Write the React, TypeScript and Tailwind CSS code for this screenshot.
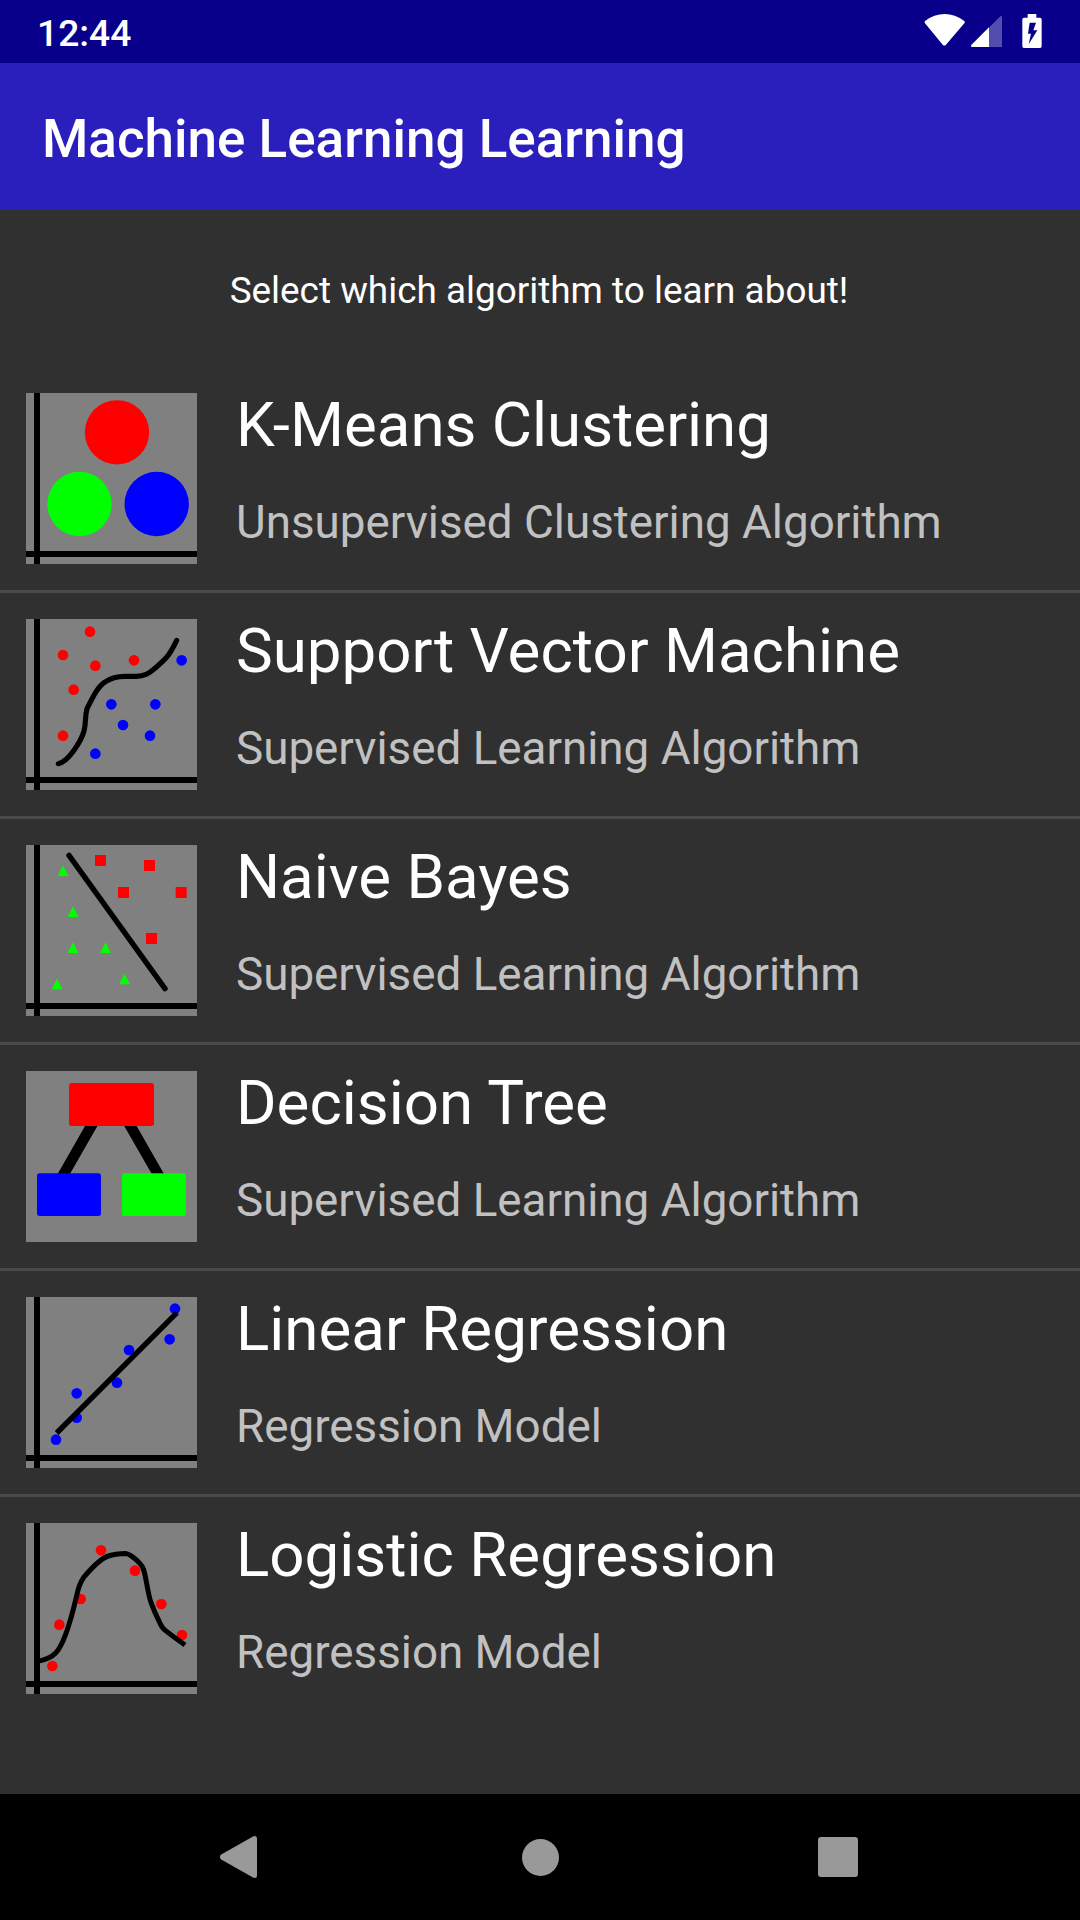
import type { ReactNode } from 'react';

const RED = '#ff0000';
const GREEN = '#00ff00';
const BLUE = '#0000ff';

function Axes({ top }: { top: number }) {
  return (
    <g fill="#000">
      <rect x={72} y={top} width={18} height={513} />
      <rect x={48} y={top + 474} width={513} height={18} />
    </g>
  );
}

function Dots({ points, color, r = 16 }: { points: number[][]; color: string; r?: number }) {
  return (
    <>
      {points.map(([x, y]) => (
        <circle key={`${x}-${y}`} cx={x} cy={y} r={r} fill={color} />
      ))}
    </>
  );
}

function Thumb({ top, children }: { top: number; children: ReactNode }) {
  return (
    <svg viewBox={`48 ${top} 513 513`} className="block size-[171px] shrink-0 bg-[#808080]">
      {children}
    </svg>
  );
}

const algorithms: { name: string; kind: string; thumb: ReactNode }[] = [
  {
    name: 'K-Means Clustering',
    kind: 'Unsupervised Clustering Algorithm',
    thumb: (
      <Thumb top={39}>
        <Axes top={39} />
        <Dots points={[[321, 157]]} color={RED} r={96.5} />
        <Dots points={[[208.5, 372]]} color={GREEN} r={96.5} />
        <Dots points={[[440, 372]]} color={BLUE} r={96.5} />
      </Thumb>
    ),
  },
  {
    name: 'Support Vector Machine',
    kind: 'Supervised Learning Algorithm',
    thumb: (
      <Thumb top={42}>
        <Axes top={42} />
        <Dots points={[[240, 80], [159, 150], [256, 182], [372, 166], [191, 254], [159, 392]]} color={RED} />
        <Dots points={[[515, 166], [304, 298], [436, 298], [339, 360], [420, 392], [256, 446]]} color={BLUE} />
        <path
          d="M145 476C176 470 215 405 222 378C229 351 224 335 231 311C247 279 262 246 285 231C305 217 320 214 345 214H378Q396 213 408 208C426 201 450 176 469 158Q483 142 500 106"
          fill="none"
          stroke="#000"
          strokeWidth={15.5}
          strokeLinecap="round"
          strokeLinejoin="round"
        />
      </Thumb>
    ),
  },
  {
    name: 'Naive Bayes',
    kind: 'Supervised Learning Algorithm',
    thumb: (
      <Thumb top={45}>
        <Axes top={45} />
        {[[255, 75], [402, 90], [324, 171], [497, 171], [408, 309]].map(([x, y]) => (
          <rect key={`${x}-${y}`} x={x} y={y} width={33} height={33} fill={RED} />
        ))}
        {[[159, 106], [189, 229], [189, 337], [286.5, 337], [141, 446], [343.5, 431]].map(([x, y]) => (
          <path key={`${x}-${y}`} d={`M${x} ${y}l16 32h-32z`} fill={GREEN} />
        ))}
        <path d="M177 76L465 476" stroke="#000" strokeWidth={16} strokeLinecap="round" />
      </Thumb>
    ),
  },
  {
    name: 'Decision Tree',
    kind: 'Supervised Learning Algorithm',
    thumb: (
      <Thumb top={33}>
        <path d="M254 180L152 358M351 180L453 358" stroke="#000" strokeWidth={32} />
        <rect x={177} y={69} width={255} height={129} rx={8} fill={RED} />
        <rect x={81} y={340} width={192} height={128} rx={8} fill={BLUE} />
        <rect x={336} y={340} width={192} height={128} rx={8} fill={GREEN} />
      </Thumb>
    ),
  },
  {
    name: 'Linear Regression',
    kind: 'Regression Model',
    thumb: (
      <Thumb top={36}>
        <Axes top={36} />
        <Dots points={[[495, 71], [479, 163], [357, 195], [321, 293], [200, 325], [200, 398], [138, 464]]} color={BLUE} />
        <path d="M140 444L501 83" stroke="#000" strokeWidth={16} />
      </Thumb>
    ),
  },
  {
    name: 'Logistic Regression',
    kind: 'Regression Model',
    thumb: (
      <Thumb top={39}>
        <Axes top={39} />
        <Dots points={[[273, 121], [375, 182], [212, 267], [454, 282], [148, 344], [516, 375], [127, 468]]} color={RED} />
        <path
          d="M84 454Q121 446 137 429C169 397 192 290 201 253Q207 223 221 202C238 182 273 145 295 138Q316 131 346 130.5C361 131 394 160 400 177C408 197 412 244 422 275Q434 308 447 333Q456 355 467 362Q484 376 525 405"
          fill="none"
          stroke="#000"
          strokeWidth={15}
          strokeLinejoin="round"
        />
      </Thumb>
    ),
  },
];

function StatusBar() {
  return (
    <header className="flex h-[63px] items-start justify-between bg-[#08008b] pl-[37px] pr-[36.33px]">
      <span className="pt-[3px] text-[37.2px] font-medium leading-[60px]">12:44</span>
      <div className="flex pt-[13px]">
        <svg viewBox="132 39 126 108" className="h-9 w-[42px]">
          <path d="M135 63Q132 67 135 70L188 134Q193 139 198 134L253 70Q256 67 253 63Q225 42 194 42Q162 42 135 63Z" fill="#fff" />
        </svg>
        <svg viewBox="270 39 102 108" className="ml-1 h-9 w-[34px]">
          <path d="M366 141V51Q366 47 362 48L274 135Q271 141 276 141Z" fill="#fff" opacity={0.3} />
          <path d="M327 141V82L274 135Q271 141 276 141Z" fill="#fff" />
        </svg>
        <svg viewBox="422 39 69 108" className="ml-[16.67px] h-9 w-[23px]">
          <path d="M442 42H468V53H479Q484 53 484 58V139Q484 144 479 144H431Q426 144 426 139V58Q426 53 431 53H442Z" fill="#fff" />
          <path d="M448 68H467L459 91H471L445 133L452 101H443Z" fill="#08008b" />
        </svg>
      </div>
    </header>
  );
}

export default function App() {
  return (
    <div className="flex h-[1920px] w-[1080px] flex-col overflow-hidden bg-[#303030] font-['Roboto',sans-serif] text-white">
      <StatusBar />
      <div className="h-[147px] bg-[#2a1fbd] pl-[42px] pt-[46px]">
        <h1 className="text-[53px] font-medium leading-[60px]">Machine Learning Learning</h1>
      </div>
      <main className="flex-1">
        <p className="h-[157px] pr-[2px] pt-[61px] text-center text-[36.9px] leading-[40px]">
          Select which algorithm to learn about!
        </p>
        <ul className="divide-y-[3px] divide-[#4a4a4a]">
          {algorithms.map((a) => (
            <li key={a.name} className="box-content flex h-[223px] items-start gap-[39px] pl-[26px]">
              <div className="pt-[26px]">{a.thumb}</div>
              <div className="whitespace-nowrap pt-[18px]">
                <h2 className="text-[61.85px] font-normal leading-[80px]">{a.name}</h2>
                <p className="mt-[27px] text-[45.78px] leading-[62px] text-[#c1c1c1]">{a.kind}</p>
              </div>
            </li>
          ))}
        </ul>
      </main>
      <nav className="flex h-[126px] items-center justify-between bg-black pl-[218px] pr-[222px]">
        <svg viewBox="0 0 45 44" className="h-[44px] w-[45px]" fill="#999">
          <path d="M3.2 19.6Q.6 22 3.2 24.4L35 42.6Q39 44 39 40.5V3.5Q39 0 35 1.4Z" />
        </svg>
        <div className="size-[37px] rounded-full bg-[#999]" />
        <div className="h-10 w-10 rounded-[3px] bg-[#999]" />
      </nav>
    </div>
  );
}
